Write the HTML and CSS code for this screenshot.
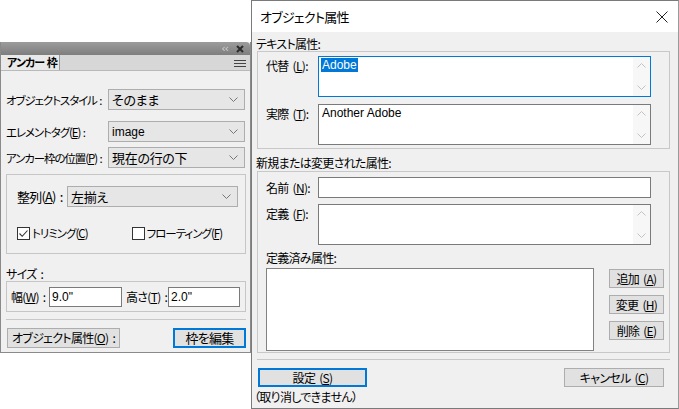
FILE: index.html
```html
<!DOCTYPE html>
<html lang="ja">
<head>
<meta charset="utf-8">
<title>オブジェクト属性</title>
<link rel="stylesheet" href="styles.css">
</head>
<body>
<div class="screen">
  <div class="left">
    <div class="panel">
      <div class="ptitle">
        <span class="chev">&lsaquo;&lsaquo;</span>
        <svg class="pclose" width="8" height="8" viewBox="0 0 8 8"><path d="M1 1L7 7M7 1L1 7" stroke="#2b2b2b" stroke-width="2"/></svg>
      </div>
      <div class="tabs">
        <div class="tab">アンカー&nbsp;枠</div>
        <svg class="menu" width="12" height="9" viewBox="0 0 12 9"><path d="M0 1.5H12M0 4.5H12M0 7.5H12" stroke="#444" stroke-width="1"/></svg>
      </div>
      <div class="pbody">
        <div class="prow r1">
          <span class="plabel">オブジェクトスタイル :</span>
          <div class="select"><span>そのまま</span><svg class="dd" width="9" height="5" viewBox="0 0 9 5"><path d="M0.5 0.5L4.5 4.5L8.5 0.5" fill="none" stroke="#777"/></svg></div>
        </div>
        <div class="prow r2">
          <span class="plabel">エレメントタグ(<u>E</u>) :</span>
          <div class="select"><span class="lat">image</span><svg class="dd" width="9" height="5" viewBox="0 0 9 5"><path d="M0.5 0.5L4.5 4.5L8.5 0.5" fill="none" stroke="#777"/></svg></div>
        </div>
        <div class="prow r3">
          <span class="plabel">アンカー枠の位置(<u>P</u>) :</span>
          <div class="select"><span>現在の行の下</span><svg class="dd" width="9" height="5" viewBox="0 0 9 5"><path d="M0.5 0.5L4.5 4.5L8.5 0.5" fill="none" stroke="#777"/></svg></div>
        </div>
        <div class="pgroup">
          <div class="grow">
            <span class="glabel">整列(<u>A</u>) :</span>
            <div class="select wide"><span>左揃え</span><svg class="dd" width="9" height="5" viewBox="0 0 9 5"><path d="M0.5 0.5L4.5 4.5L8.5 0.5" fill="none" stroke="#777"/></svg></div>
          </div>
          <div class="checks">
            <label class="check c1"><span class="box"><svg width="11" height="11" viewBox="0 0 11 11"><path d="M1.5 5.5L4.2 8.3L9.5 2.5" fill="none" stroke="#333" stroke-width="1.1"/></svg></span>トリミング(<u>C</u>)</label>
            <label class="check c2"><span class="box"></span>フローティング(<u>F</u>)</label>
          </div>
        </div>
        <div class="sizelabel">サイズ :</div>
        <div class="sizebox">
          <span class="slab">幅(<u>W</u>) :</span>
          <div class="input w1">9.0"</div>
          <span class="slab s2">高さ(<u>T</u>) :</span>
          <div class="input w2">2.0"</div>
        </div>
        <div class="psep"></div>
        <div class="pbtns">
          <div class="btn obj">オブジェクト属性(<u>O</u>) :</div>
          <div class="btn edit">枠を編集</div>
        </div>
      </div>
    </div>
  </div>

  <div class="dialog">
    <div class="dtitle">
      <span>オブジェクト属性</span>
      <svg class="dclose" width="12" height="12" viewBox="0 0 12 12"><path d="M0.5 0.5L11.5 11.5M11.5 0.5L0.5 11.5" stroke="#222" stroke-width="1"/></svg>
    </div>
    <div class="dbody">
      <div class="slabel">テキスト属性:</div>
      <div class="group g1">
        <div class="frow f1">
          <span class="flabel">代替 (<u>L</u>):</span>
          <div class="ta focus"><span class="sel">Adobe</span>
            <div class="sb"><svg width="9" height="5" viewBox="0 0 9 5"><path d="M0.5 4.5L4.5 0.5L8.5 4.5" fill="none" stroke="#c2c2c2"/></svg><svg width="9" height="5" viewBox="0 0 9 5"><path d="M0.5 0.5L4.5 4.5L8.5 0.5" fill="none" stroke="#c2c2c2"/></svg></div>
          </div>
        </div>
        <div class="frow f2">
          <span class="flabel">実際 (<u>T</u>):</span>
          <div class="ta"><span class="txt">Another Adobe</span>
            <div class="sb"><svg width="9" height="5" viewBox="0 0 9 5"><path d="M0.5 4.5L4.5 0.5L8.5 4.5" fill="none" stroke="#c2c2c2"/></svg><svg width="9" height="5" viewBox="0 0 9 5"><path d="M0.5 0.5L4.5 4.5L8.5 0.5" fill="none" stroke="#c2c2c2"/></svg></div>
          </div>
        </div>
      </div>
      <div class="slabel s2">新規または変更された属性:</div>
      <div class="group g2">
        <div class="frow f3">
          <span class="flabel">名前 (<u>N</u>):</span>
          <div class="tin"></div>
        </div>
        <div class="frow f4">
          <span class="flabel">定義 (<u>F</u>):</span>
          <div class="ta"><span class="txt"></span>
            <div class="sb"><svg width="9" height="5" viewBox="0 0 9 5"><path d="M0.5 4.5L4.5 0.5L8.5 4.5" fill="none" stroke="#c2c2c2"/></svg><svg width="9" height="5" viewBox="0 0 9 5"><path d="M0.5 0.5L4.5 4.5L8.5 0.5" fill="none" stroke="#c2c2c2"/></svg></div>
          </div>
        </div>
        <div class="deflabel">定義済み属性:</div>
        <div class="defrow">
          <div class="list"></div>
          <div class="sidebtns">
            <div class="btn sbtn">追加 (<u>A</u>)</div>
            <div class="btn sbtn">変更 (<u>H</u>)</div>
            <div class="btn sbtn">削除 (<u>E</u>)</div>
          </div>
        </div>
      </div>
      <div class="dsep"></div>
      <div class="dfoot">
        <div class="btn ok">設定 (<u>S</u>)</div>
        <div class="btn cancel">キャンセル (<u>C</u>)</div>
      </div>
      <div class="note">（取り消しできません）</div>
    </div>
  </div>
</div>
</body>
</html>
```

FILE: styles.css
```css
* { box-sizing: border-box; }
html, body { margin: 0; padding: 0; }
body {
  background: #ffffff;
  font-family: "Noto Sans CJK JP", "Noto Sans", sans-serif;
  font-size: 12px;
  line-height: 14px;
  color: #000;
  font-feature-settings: "palt";
  letter-spacing: -0.7px;
  word-spacing: 2px;
}
u { text-decoration: underline; text-underline-offset: 1px; }
.screen { display: flex; width: 679px; height: 409px; overflow: hidden; }

/* ---------- left panel ---------- */
.left { width: 251px; padding-top: 42px; }
.panel {
  width: 251px;
  height: 311px;
  border: 1px solid #8a8a8a;
  border-top: none;
  background: #f0f0f0;
  display: flex;
  flex-direction: column;
}
.ptitle {
  height: 13px;
  background: linear-gradient(#9c9c9c, #7e7e7e);
  border-radius: 0 4px 0 0;
  display: flex;
  justify-content: flex-end;
  align-items: center;
  padding-right: 6px;
  gap: 8px;
}
.chev { color: #d2d2d2; font-family: "DejaVu Sans", sans-serif; font-size: 11px; line-height: 10px; letter-spacing: -1px; }
.pclose { display: block; }
.tabs {
  height: 16px;
  background: #d7d7d7;
  border-bottom: 1px solid #b9b9b9;
  display: flex;
  align-items: stretch;
  justify-content: space-between;
}
.tab {
  width: 59px;
  background: #e9e9e9;
  border-right: 1px solid #9a9a9a;
  font-weight: bold;
  font-size: 11px;
  padding-left: 6px;
  line-height: 15px;
  letter-spacing: -0.9px;
  word-spacing: 1px;
  white-space: nowrap;
}
.menu { margin: 4px 4px 0 0; }
.pbody { padding: 0 4px 0 4px; display: flex; flex-direction: column; }
.prow { display: flex; align-items: center; }
.prow.r1 { margin-top: 18px; }
.prow.r2 { margin-top: 11px; }
.prow.r3 { margin-top: 5px; }
.plabel { width: 103px; padding-left: 1px; white-space: nowrap; font-size: 11.5px; letter-spacing: -1.1px; word-spacing: 1px; }
.select {
  width: 137px;
  height: 21px;
  background: #e6e6e6;
  border: 1px solid #adadad;
  display: flex;
  align-items: center;
  justify-content: space-between;
  padding: 0 6px 0 3px;
  font-size: 13px;
  letter-spacing: -0.3px;
}
.select .lat { font-family: "Liberation Sans", sans-serif; font-size: 12px; letter-spacing: 0; }
.select.wide { width: 171px; }
.dd { display: block; }
.pgroup {
  margin-top: 6px;
  margin-left: 1px;
  width: 240px;
  height: 80px;
  border: 1px solid #c6c6c6;
  padding: 11px 7px 0 10px;
}
.grow { display: flex; align-items: center; }
.glabel { width: 50px; font-size: 13px; letter-spacing: -0.8px; }
.checks { display: flex; margin-top: 19px; }
.check { display: flex; align-items: center; white-space: nowrap; font-size: 11.5px; letter-spacing: -1px; }
.check.c2 { margin-left: 44px; }
.box {
  width: 13px; height: 13px;
  border: 1px solid #333;
  background: #fff;
  margin-right: 2px;
  display: flex; align-items: center; justify-content: center;
}
.box svg { display: block; }
.sizelabel { margin-top: 13px; padding-left: 1px; height: 14px; }
.sizebox {
  margin-top: 0px;
  margin-left: 1px;
  width: 240px;
  height: 31px;
  border: 1px solid #c6c6c6;
  display: flex;
  align-items: center;
  padding-left: 4px;
}
.slab { white-space: nowrap; width: 38px; }
.slab.s2 { width: 42px; margin-left: 4px; }
.input {
  height: 20px;
  background: #fff;
  border: 1px solid #7a7a7a;
  padding-left: 2px;
  line-height: 18px;
  font-family: "Liberation Sans", sans-serif;
  font-size: 12px;
  letter-spacing: 0;
}
.input.w1 { width: 73px; }
.input.w2 { width: 72px; }
.psep { margin-top: 7px; height: 1px; background: #c8c8c8; margin-left: 1px; width: 240px; }
.pbtns { display: flex; justify-content: space-between; margin-top: 8px; padding-left: 2px; }
.btn {
  background: #e1e1e1;
  border: 1px solid #adadad;
  display: flex;
  align-items: center;
  justify-content: center;
  white-space: nowrap;
}
.btn.obj { width: 113px; height: 20px; }
.btn.edit { width: 73px; height: 20px; border: 2px solid #0078d7; font-size: 13px; }

/* ---------- dialog ---------- */
.dialog {
  width: 428px;
  height: 409px;
  border: 1px solid #7a7a7a;
  border-right-color: #9a9a9a;
  background: #f0f0f0;
  display: flex;
  flex-direction: column;
}
.dtitle {
  height: 31px;
  background: #ffffff;
  display: flex;
  align-items: center;
  justify-content: space-between;
  padding: 0 10px 0 8px;
  font-size: 13px;
}
.dclose { display: block; }
.dbody { padding: 0 9px 0 4px; display: flex; flex-direction: column; }
.slabel { margin-top: 5px; height: 14px; }
.slabel.s2 { margin-top: 7px; }
.group {
  margin-left: 1px;
  width: 413px;
  border: 1px solid #c8c8c8;
  background: #f0f0f0;
}
.g1 { margin-top: 0; height: 98px; padding-top: 4px; }
.g2 { margin-top: 1px; height: 182px; padding-top: 5px; }
.frow { display: flex; align-items: flex-start; }
.flabel { width: 60px; padding-left: 8px; white-space: nowrap; padding-top: 3px; }
.ta {
  width: 333px;
  height: 41px;
  background: #fff;
  border: 1px solid #7a7a7a;
  position: relative;
  padding: 1px 0 0 2px;
  font-family: "Liberation Sans", sans-serif;
  font-size: 12px;
  letter-spacing: 0;
  word-spacing: 0;
}
.ta.focus { border-color: #0078d7; }
.frow.f2 { margin-top: 7px; }
.frow.f3 { align-items: center; }
.frow.f3 .flabel { padding-top: 0; }
.frow.f4 { margin-top: 6px; }
.sel { background: #0078d7; color: #fff; padding: 0 1px; }
.txt { padding-left: 1px; }
.sb {
  position: absolute;
  right: 0;
  top: 0;
  bottom: 0;
  width: 17px;
  background: #f7f7f7;
  display: flex;
  flex-direction: column;
  justify-content: space-between;
  align-items: center;
  padding: 6px 0 6px 0;
}
.sb svg { display: block; }
.tin { width: 333px; height: 21px; background: #fff; border: 1px solid #7a7a7a; }
.deflabel { margin-top: 6px; padding-left: 8px; height: 14px; }
.defrow { display: flex; margin-top: 3px; padding-left: 8px; }
.list { width: 328px; height: 83px; background: #fff; border: 1px solid #828282; }
.sidebtns { display: flex; flex-direction: column; gap: 7px; margin-left: 15px; margin-top: 1px; }
.btn.sbtn { width: 55px; height: 19px; }
.dsep { margin-top: 6px; height: 1px; background: #c8c8c8; margin-left: 1px; width: 413px; }
.dfoot { display: flex; justify-content: space-between; margin-top: 8px; padding-left: 2px; padding-right: 5px; }
.btn.ok { width: 109px; height: 19px; border: 2px solid #0078d7; }
.btn.cancel { width: 100px; height: 19px; }
.note { margin-top: 3px; margin-left: -2px; height: 14px; }
```
